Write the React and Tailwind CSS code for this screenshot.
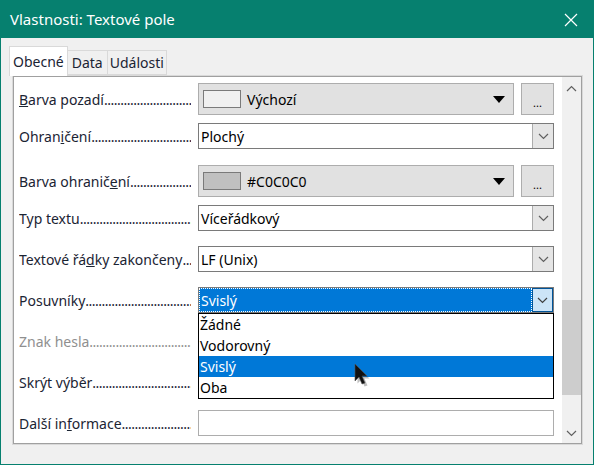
import React from 'react';

const font = { fontFamily: '"Noto Sans", "Open Sans", sans-serif' };

const Chevron = ({ className = '' }) => (
  <svg width="11" height="7" viewBox="0 0 11 7" className={className}>
    <path d="M1 1 L5.5 5.5 L10 1" fill="none" stroke="currentColor" strokeWidth="1.2" />
  </svg>
);

const Label = ({ children, muted }) => (
  <div className={`flex w-[179px] shrink-0 items-center overflow-hidden whitespace-nowrap pr-[7px] ${muted ? 'text-[#8f8f8f]' : 'text-[#1b2433]'}`}>
    <span className="shrink-0">{children}</span>
    <span className="min-w-0 flex-1 overflow-hidden tracking-[-0.5px]">
      ..............................................................
    </span>
  </div>
);

const Combo = ({ value, active }) =>
  active ? (
    <div className="flex h-[26px] w-[356px] border border-[#7a7a7a] bg-[#0078d7]">
      <div className="flex flex-1 items-center border border-dotted border-white pl-[1px] text-white">{value}</div>
      <div className="flex w-[21px] items-center justify-center border border-[#005499] bg-[#cce4f7] text-[#404040]">
        <Chevron />
      </div>
    </div>
  ) : (
    <div className="flex h-[26px] w-[356px] border border-[#7a7a7a] bg-white">
      <div className="flex flex-1 items-center pl-[2px] text-black">{value}</div>
      <div className="flex w-[21px] items-center justify-center border-l border-[#acacac] bg-[#e5e5e5] text-[#606060]">
        <Chevron />
      </div>
    </div>
  );

const ColorBox = ({ swatch, text }) => (
  <div className="flex items-center gap-[7px]">
    <div className="flex h-[32px] w-[316px] items-center border border-[#adadad] bg-[#e1e1e1] pl-[4px] pr-[8px]">
      <div className={`h-[18px] w-[38px] border border-[#7a7a7a] ${swatch}`} />
      <span className="ml-[6px] flex-1 text-black">{text}</span>
      <svg width="12" height="7" viewBox="0 0 12 7">
        <path d="M0 0 H12 L6 7 Z" fill="#000" />
      </svg>
    </div>
    <div className="flex h-[32px] w-[33px] items-end justify-center border border-[#adadad] bg-[#e1e1e1] pb-[6px] text-[11px] leading-none text-black">
      ...
    </div>
  </div>
);

export default function App() {
  const options = ['Žádné', 'Vodorovný', 'Svislý', 'Oba'];

  return (
    <div style={font} className="relative flex h-[465px] w-[594px] flex-col border border-[#06806f] bg-[#f0f0f0] text-[14px]">
      {/* title bar */}
      <div className="flex h-[37px] shrink-0 items-center justify-between bg-[#06806f] pl-[9px] pr-[15px] text-[15px] text-white">
        <span>Vlastnosti: Textové pole</span>
        <svg width="14" height="14" viewBox="0 0 14 14">
          <path d="M1 1 L13 13 M13 1 L1 13" stroke="#fff" strokeWidth="1.2" />
        </svg>
      </div>

      {/* tabs */}
      <div className="ml-[8px] mt-[8px] flex items-end">
        <div className="relative z-10 -mb-[1px] flex h-[30px] items-center border border-b-0 border-[#d9d9d9] bg-white px-[3px] text-[#1b2433]">
          Obecné
        </div>
        <div className="flex h-[25px] items-center border border-l-0 border-[#d9d9d9] px-[4px] text-[#1b2433]">Data</div>
        <div className="flex h-[25px] items-center border border-l-0 border-[#d9d9d9] px-[2px] text-[#1b2433]">Události</div>
      </div>

      {/* panel */}
      <div className="ml-[11px] h-[370px] w-[571px] border border-[#d9d9d9] bg-white">
        <div className="flex h-full border border-[#a0a0a0]">
          <div className="flex flex-1 flex-col bg-white pl-[5px] pt-[6px]">
            <div className="mb-[8px] flex h-[32px] items-center">
              <Label><u>B</u>arva pozadí</Label>
              <ColorBox swatch="bg-[#f0f0f0]" text="Výchozí" />
            </div>
            <div className="mb-[16px] flex h-[26px] items-center">
              <Label>Ohran<u>i</u>čení</Label>
              <Combo value="Plochý" />
            </div>
            <div className="mb-[8px] flex h-[32px] items-center">
              <Label>Barva ohranič<u>e</u>ní</Label>
              <ColorBox swatch="bg-[#c0c0c0]" text="#C0C0C0" />
            </div>
            <div className="mb-[15px] flex h-[26px] items-center">
              <Label>Typ textu</Label>
              <Combo value="Víceřádkový" />
            </div>
            <div className="mb-[15px] flex h-[26px] items-center">
              <Label>Textové řá<u>d</u>ky zakončeny</Label>
              <Combo value="LF (Unix)" />
            </div>
            <div className="relative mb-[15px] flex h-[26px] items-center">
              <Label>Posuvníky</Label>
              <Combo value="Svislý" active />
              <div className="absolute left-[179px] top-[26px] z-20 w-[356px] border border-black bg-white">
                {options.map(o => (
                  <div
                    key={o}
                    className={`flex h-[21px] items-center pl-[1px] ${o === 'Svislý' ? 'bg-[#0078d7] text-white' : 'text-black'}`}
                  >
                    {o}
                  </div>
                ))}
              </div>
            </div>
            <div className="mb-[15px] flex h-[26px] items-center">
              <Label muted>Znak hesla</Label>
            </div>
            <div className="mb-[15px] flex h-[26px] items-center">
              <Label>Skrýt výběr</Label>
            </div>
            <div className="flex h-[26px] items-center">
              <Label>Další in<u>f</u>ormace</Label>
              <div className="h-[26px] w-[356px] border border-[#adadad] bg-white" />
            </div>
          </div>

          {/* scrollbar */}
          <div className="flex w-[19px] flex-col bg-[#f0f0f0]">
            <div className="flex h-[22px] items-center justify-center text-[#606060]">
              <Chevron className="rotate-180" />
            </div>
            <div className="h-[201px]" />
            <div className="h-[95px] bg-[#cdcdcd]" />
            <div className="flex flex-1 items-end justify-center pb-[6px] text-[#606060]">
              <Chevron />
            </div>
          </div>
        </div>
      </div>

      {/* mouse cursor */}
      <svg className="absolute left-[352px] top-[361px] z-30" width="18" height="26" viewBox="0 0 18 26">
        <path d="M3 3 L3 20 L7 16 L10 23 L13 22 L10 15 L15 15 Z" fill="#000" opacity="0.25" transform="translate(1.5 1.5)" />
        <path d="M2 2 L2 19 L6 15 L9 22 L12 21 L9 14 L14 14 Z" fill="#111" stroke="#555" strokeWidth="0.6" />
      </svg>
    </div>
  );
}
